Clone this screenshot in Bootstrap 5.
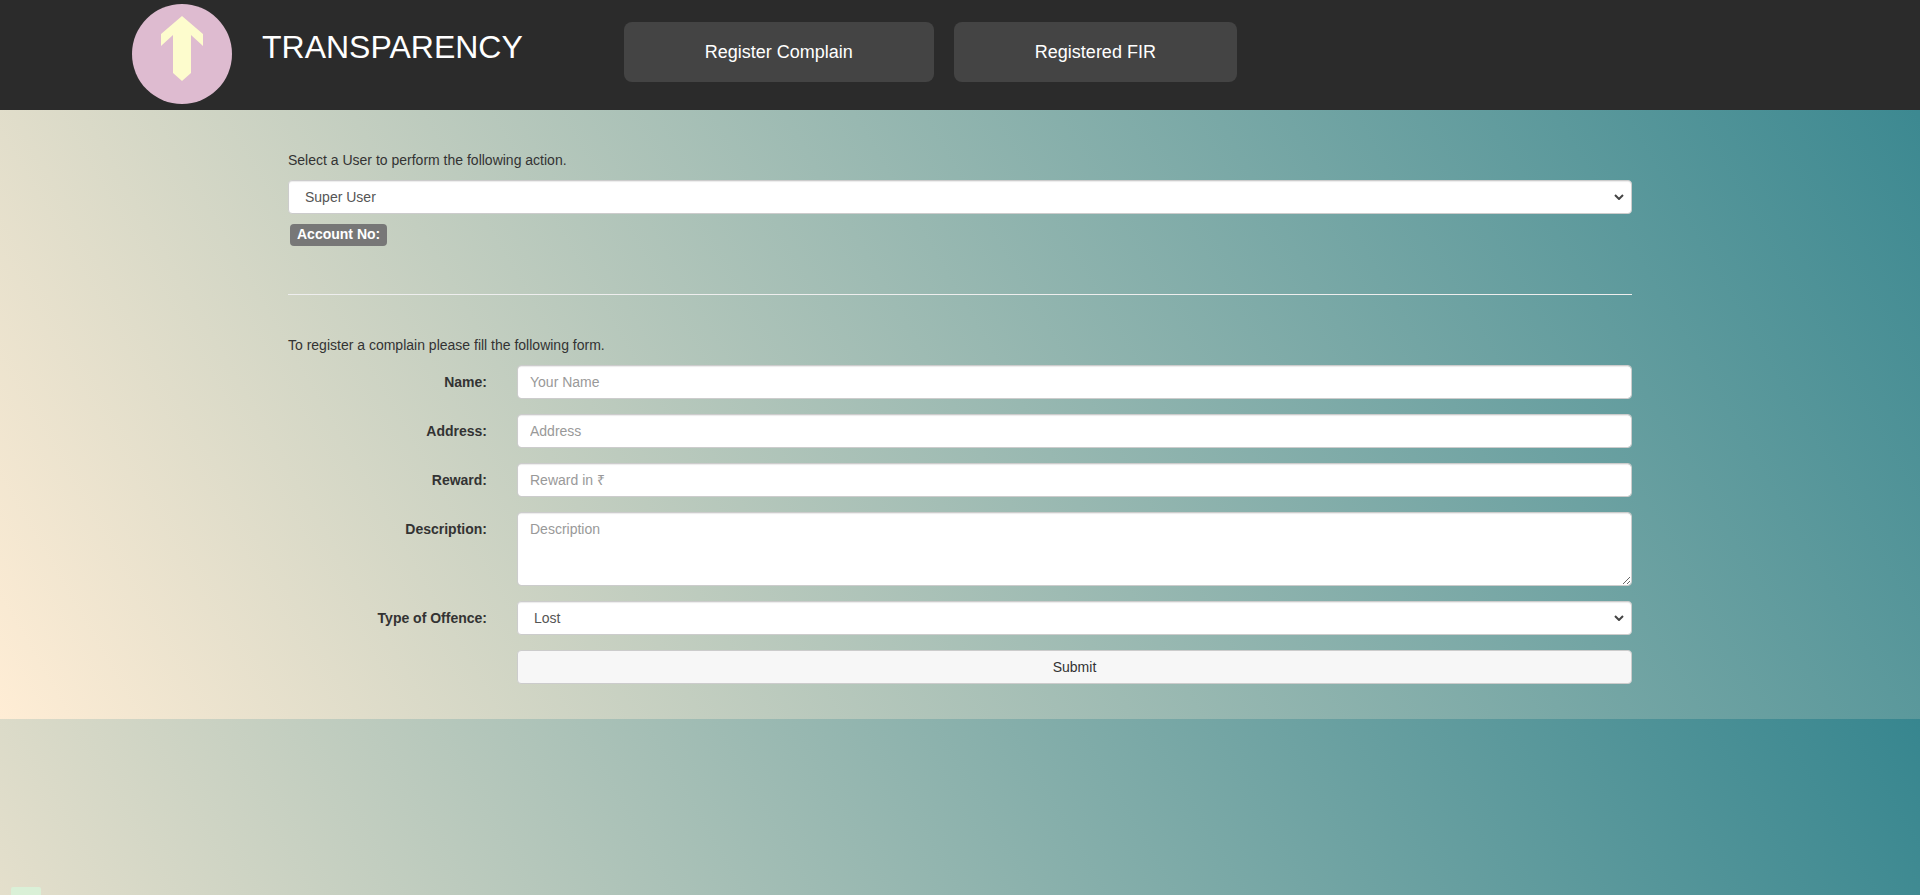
<!DOCTYPE html>
<html lang="en">
<head>
<meta charset="utf-8">
<meta name="viewport" content="width=device-width, initial-scale=1">
<title>Transparency</title>
<link href="https://cdn.jsdelivr.net/npm/bootstrap@5.3.0/dist/css/bootstrap.min.css" rel="stylesheet">
<style>
  body {
    font-family: "Liberation Sans", Arial, sans-serif;
    font-size: 14px;
    line-height: 20px;
    color: #333;
    background: linear-gradient(60deg, #ffedd5, #37868f);
  }
  .topbar { background: #2b2b2b; height: 110px; padding: 4px 132px; }
  .brand-title { font-size: 32px; line-height: 40px; margin: 23px 101px 0 30px; }
  .nav-group { gap: 20px; }
  .nav-btn {
    --bs-btn-color: #fff;
    --bs-btn-bg: #444;
    --bs-btn-hover-color: #fff;
    --bs-btn-hover-bg: #555;
    --bs-btn-border-width: 0;
    --bs-btn-border-radius: 8px;
    --bs-btn-padding-x: 81px;
    --bs-btn-padding-y: 20px;
    --bs-btn-font-size: 18px;
    --bs-btn-line-height: 20px;
    margin-top: 18px;
  }
  .page-main { width: 70%; padding: 40px 0 35px; }
  .page-main p { margin-bottom: 10px; }
  .page-main .form-control, .page-main .form-select {
    min-height: 34px;
    padding: 6px 12px;
    font-size: 14px;
    line-height: 20px;
    color: #555;
    border: 1px solid #ccc;
    border-radius: 4px;
    box-shadow: inset 0 1px 1px rgba(0, 0, 0, .08);
  }
  .page-main .form-control::placeholder { color: #999; }
  .page-main .form-select {
    padding-left: 16px;
    background-image: url("data:image/svg+xml,%3Csvg xmlns='http://www.w3.org/2000/svg' viewBox='0 0 10 6'%3E%3Cpath d='M1 1l4 4 4-4' fill='none' stroke='%23444' stroke-width='2'/%3E%3C/svg%3E");
    background-size: 10px 6px;
    background-position: right 7px center;
  }
  .page-main textarea.form-control { height: 74px; }
  .page-main .submit-btn { background: #f7f7f7; color: #333; box-shadow: none; text-align: center; }
  .account-tag { background: #777; font-size: 14px; line-height: 18px; padding: 1px 7px 3px; border-radius: 4px; margin: 10px 2px 0; }
  .divider { border-top: 1px solid #eee; opacity: 1; margin: 48px 0 40px; }
  .field-row { --bs-gutter-x: 30px; margin-bottom: 15px; }
  .field-label { padding-top: 7px; text-align: right; }
  .status-chip { left: 11px; right: auto; width: 30px; height: 8px; background: #daf0d7; border-radius: 2px 2px 0 0; }
</style>
</head>
<body>
<header class="topbar d-flex align-items-start text-white">
  <svg width="100" height="100" viewBox="0 0 100 100" class="flex-shrink-0" role="img" aria-label="Transparency logo">
    <circle cx="50" cy="50" r="50" fill="#debbd0"/>
    <path fill="#fdfccd" d="M50 12 71 30V42L59 31V69L50 77 41 69V31L29 42V30Z"/>
  </svg>
  <h1 class="brand-title fw-normal">TRANSPARENCY</h1>
  <nav class="d-flex nav-group">
    <button type="button" class="btn nav-btn">Register Complain</button>
    <button type="button" class="btn nav-btn">Registered FIR</button>
  </nav>
</header>

<main class="page-main mx-auto">
  <p><label for="user">Select a User to perform the following action.</label></p>
  <select id="user" class="form-select">
    <option>Super User</option>
  </select>
  <div class="d-flex"><span class="account-tag fw-bold text-white">Account No:</span></div>

  <hr class="divider">

  <p>To register a complain please fill the following form.</p>
  <form>
    <div class="row field-row">
      <label for="name" class="col-2 field-label fw-bold">Name:</label>
      <div class="col-10"><input id="name" type="text" class="form-control" placeholder="Your Name"></div>
    </div>
    <div class="row field-row">
      <label for="address" class="col-2 field-label fw-bold">Address:</label>
      <div class="col-10"><input id="address" type="text" class="form-control" placeholder="Address"></div>
    </div>
    <div class="row field-row">
      <label for="reward" class="col-2 field-label fw-bold">Reward:</label>
      <div class="col-10"><input id="reward" type="text" class="form-control" placeholder="Reward in ₹"></div>
    </div>
    <div class="row field-row">
      <label for="description" class="col-2 field-label fw-bold">Description:</label>
      <div class="col-10"><textarea id="description" class="form-control" placeholder="Description"></textarea></div>
    </div>
    <div class="row field-row">
      <label for="offence" class="col-2 field-label fw-bold">Type of Offence:</label>
      <div class="col-10">
        <select id="offence" class="form-select">
          <option>Lost</option>
        </select>
      </div>
    </div>
    <div class="row field-row mb-0">
      <div class="col-10 offset-2"><button type="submit" class="form-control submit-btn">Submit</button></div>
    </div>
  </form>
</main>

<div class="status-chip fixed-bottom"></div>
<script src="https://cdn.jsdelivr.net/npm/bootstrap@5.3.0/dist/js/bootstrap.bundle.min.js"></script>
</body>
</html>
